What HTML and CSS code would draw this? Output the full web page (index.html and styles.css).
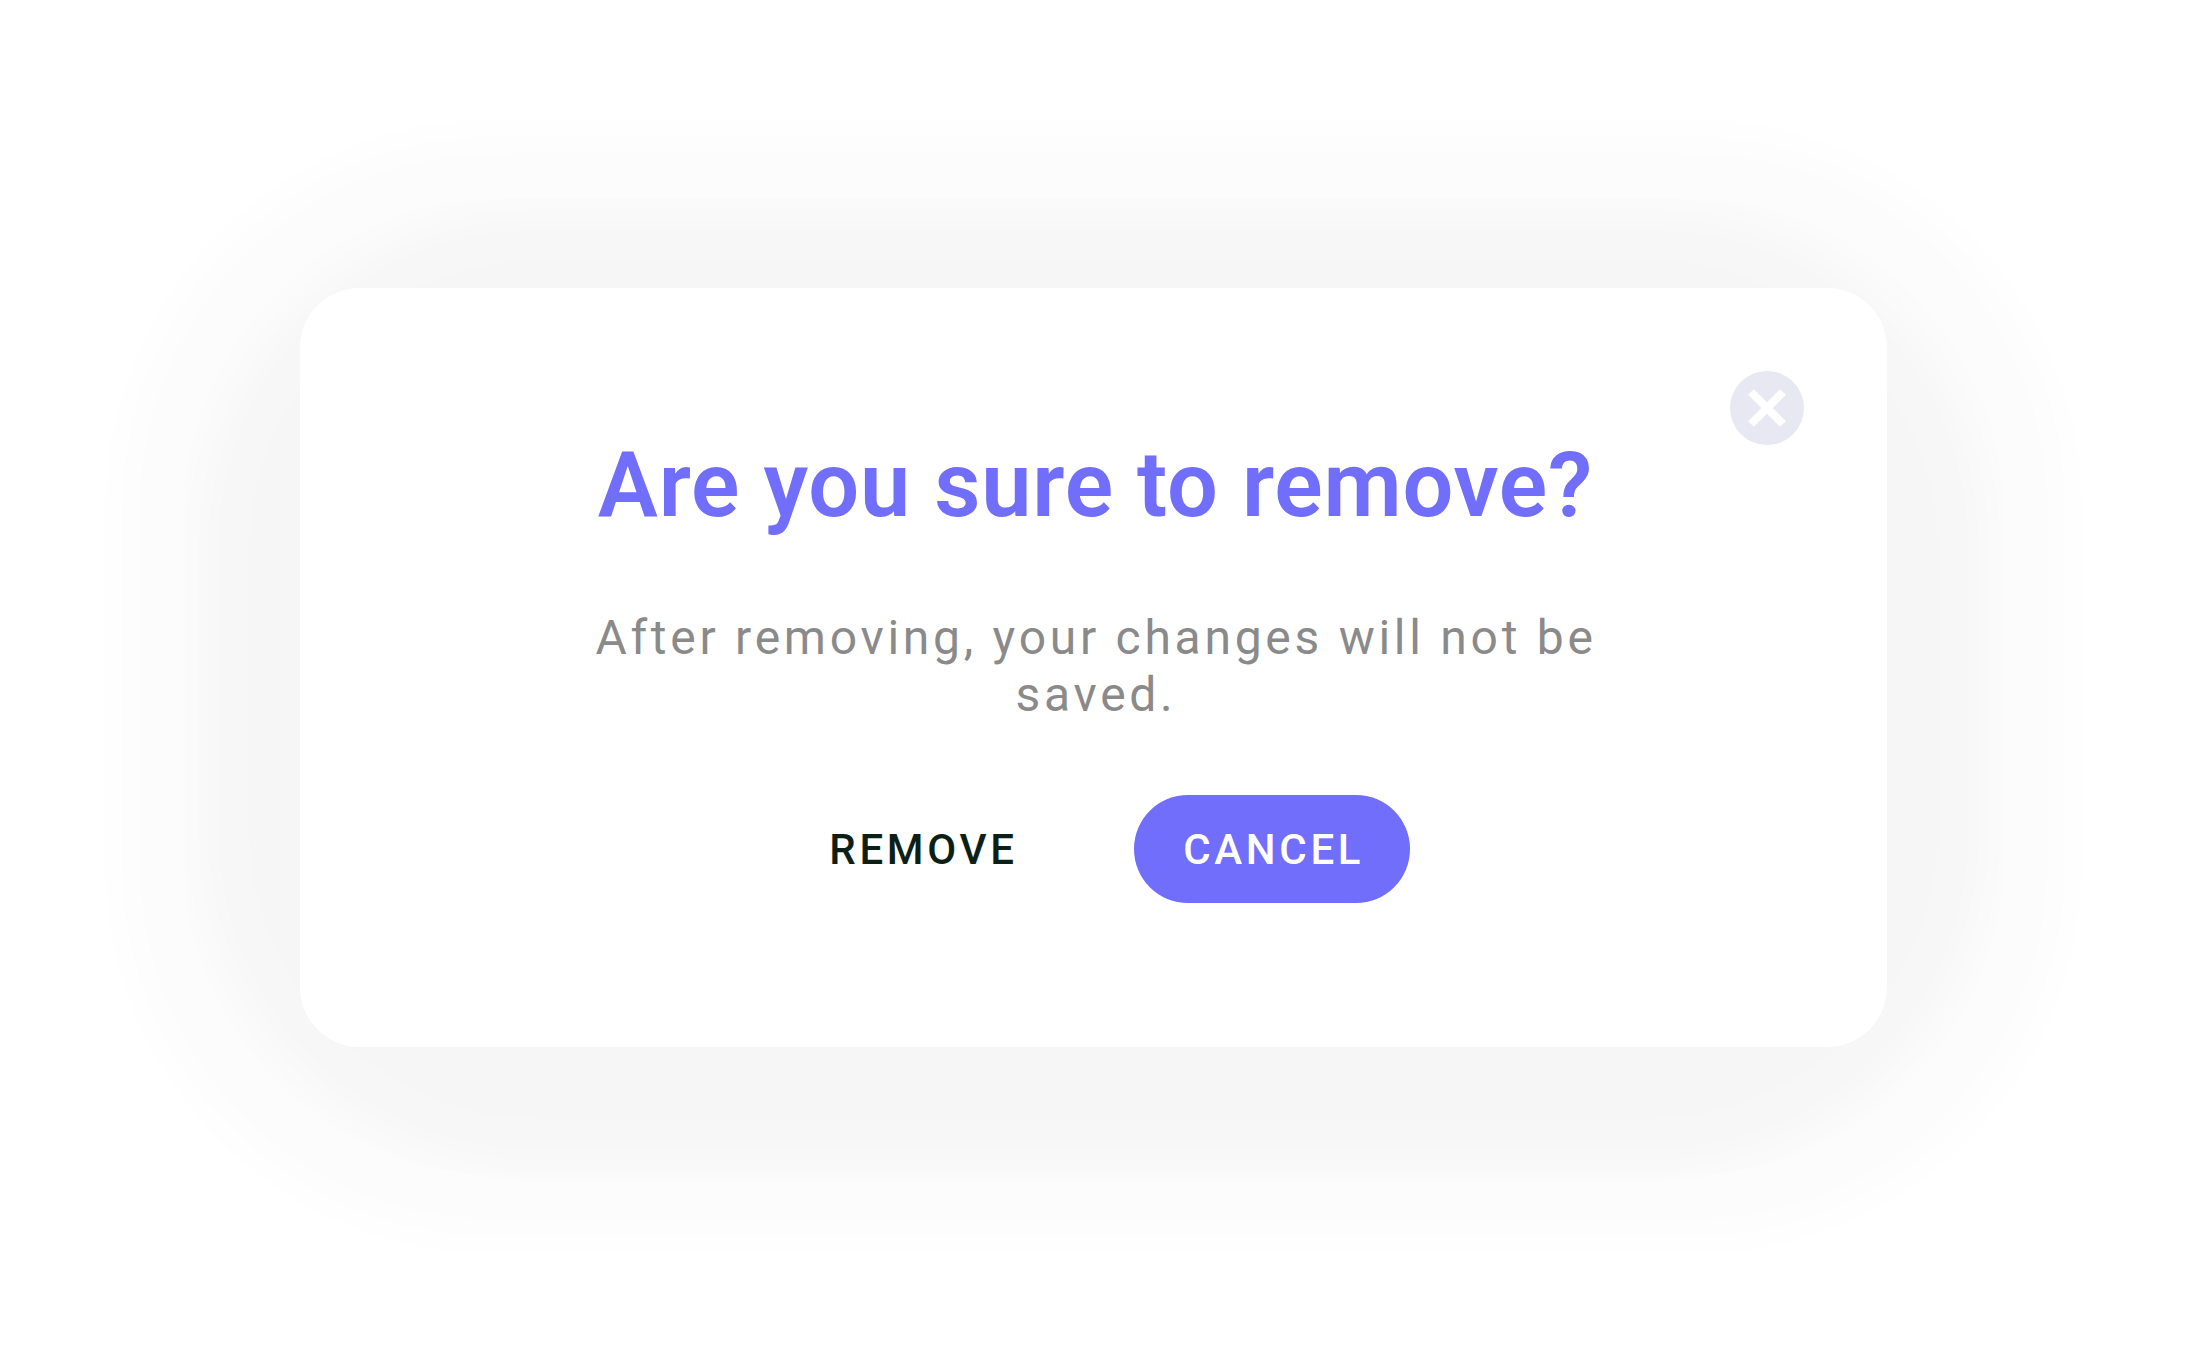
FILE: index.html
```html
<!DOCTYPE html>
<html lang="en">
<head>
    <meta charset="UTF-8">
    <meta name="viewport" content="width=device-width, initial-scale=1.0">
    <title>Remove</title>
    <link rel="stylesheet" href="styles.css">
</head>
<body>
    <div class="modal-wrap">
        <div class="modal">
            <button class="close" type="button" aria-label="Close">
                <svg width="74" height="74" viewBox="0 0 74 74">
                    <circle cx="37" cy="37" r="37" fill="#e8e8f2"/>
                    <path d="M21 21L53 53M53 21L21 53" stroke="#fff" stroke-width="8"/>
                </svg>
            </button>
            <h2 class="title">Are you sure to remove?</h2>
            <p class="text">After removing, your changes will not be saved.</p>
            <div class="actions">
                <button class="btn" type="button">REMOVE</button>
                <button class="btn btn-primary" type="button">CANCEL</button>
            </div>
        </div>
    </div>
</body>
</html>
```
FILE: styles.css
```css
* {
    box-sizing: border-box;
}
body {
    margin: 0;
    padding: 288px 300px 0;
    height: 1359px;
    overflow: hidden;
    background-color: #fff;
    font-family: Roboto, sans-serif;
}
.modal-wrap {
    position: relative;
    width: 1587px;
}
/* soft shadow in two layers */
.modal-wrap::before,
.modal-wrap::after {
    content: "";
    position: absolute;
    z-index: -1;
    background-color: #000;
}
.modal-wrap::before {
    inset: -152px -178px -190px;
    border-radius: 370px;
    filter: blur(26px);
    opacity: 0.012;
}
.modal-wrap::after {
    inset: -74px -97px -118px;
    border-radius: 330px;
    filter: blur(19px);
    opacity: 0.016;
}
.modal {
    position: relative;
    display: flex;
    flex-direction: column;
    align-items: center;
    height: 759px;
    padding-top: 145px;
    border-radius: 60px;
    background-color: #fff;
}
.close {
    position: absolute;
    top: 83px;
    right: 83px;
    padding: 0;
    border: none;
    background: none;
    cursor: pointer;
}
.close svg {
    display: block;
}
.title {
    margin: 0;
    padding-left: 4px;
    font-size: 90px;
    line-height: 105px;
    font-weight: 600;
    color: #706efa;
    letter-spacing: 0.8px;
    white-space: nowrap;
}
.text {
    width: 1050px;
    margin: 71px 0 0;
    padding-left: 5px;
    font-size: 48px;
    line-height: 57px;
    letter-spacing: 3.73px;
    text-align: center;
    color: #8a8a8a;
}
.actions {
    display: flex;
    gap: 68px;
    margin: 72px 0 0 4px;
}
.btn {
    height: 108px;
    padding: 0 48px;
    border: none;
    border-radius: 54px;
    background: none;
    font-family: inherit;
    font-size: 42px;
    font-weight: 500;
    letter-spacing: 3.7px;
    color: #0b1f16;
    cursor: pointer;
}
.btn-primary {
    width: 276px;
    padding: 0 0 0 4px;
    background-color: #706efa;
    color: #fff;
}
```
